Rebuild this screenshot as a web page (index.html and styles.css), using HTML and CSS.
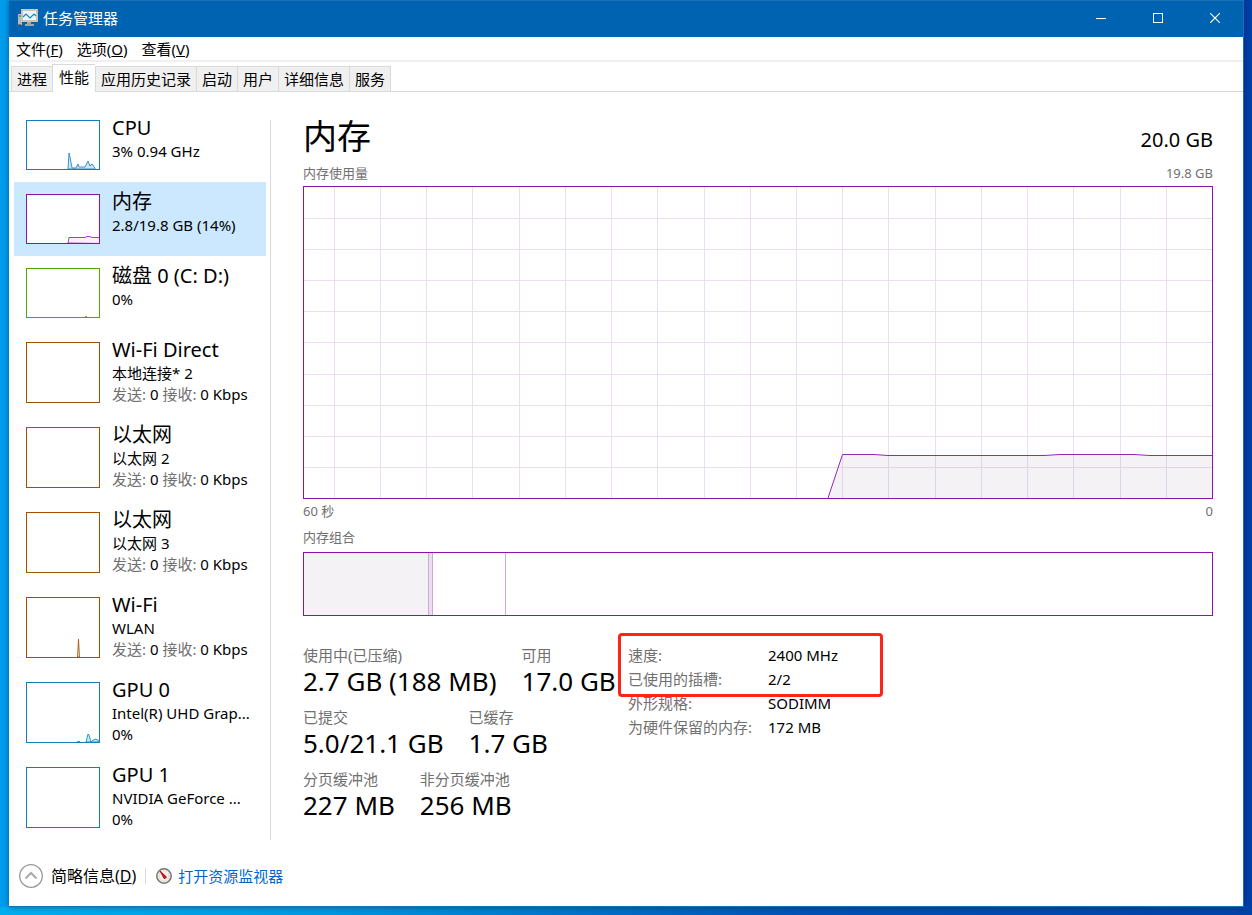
FILE: index.html
```html
<!DOCTYPE html>
<html lang="zh-CN">
<head>
    <meta charset="UTF-8">
    <meta name="viewport" content="width=device-width, initial-scale=1.0">
    <title>任务管理器</title>
    <link rel="stylesheet" href="styles.css">
</head>
<body>
<div class="window">
    <header class="titlebar">
        <svg class="app-icon" width="20" height="18" viewBox="0 0 20 18">
            <rect x="0" y="5" width="4" height="11" fill="#b8b8b8"/>
            <rect x="1" y="6" width="2" height="2" fill="#45c23c"/>
            <path d="M0 15h3v1H0z" fill="#777"/>
            <rect x="3" y="0" width="17" height="13" fill="#c9c5bd"/>
            <rect x="5" y="2" width="13" height="9" fill="#e9f8ff"/>
            <path d="M5 8l3-3 4 4 4-4 2 2" fill="none" stroke="#1585b5" stroke-width="1.2"/>
            <path d="M9 13h4v2h3v2H7v-2h2z" fill="#a9a59c"/>
        </svg>
        <h1>任务管理器</h1>
        <div class="controls">
            <button aria-label="最小化"><svg width="10" height="10"><path d="M0 5.5h10" stroke="#fff"/></svg></button>
            <button aria-label="最大化"><svg width="10" height="10"><rect x=".5" y=".5" width="9" height="9" fill="none" stroke="#fff"/></svg></button>
            <button aria-label="关闭"><svg width="10" height="10"><path d="M0 0l10 10M10 0L0 10" stroke="#fff" stroke-width="1.2"/></svg></button>
        </div>
    </header>
    <nav class="menu">
        <button>文件(<u>F</u>)</button>
        <button>选项(<u>O</u>)</button>
        <button>查看(<u>V</u>)</button>
    </nav>
    <div class="tabs">
        <button>进程</button>
        <button class="active">性能</button>
        <button>应用历史记录</button>
        <button>启动</button>
        <button>用户</button>
        <button>详细信息</button>
        <button>服务</button>
    </div>
    <div class="content">
        <aside class="sidebar">
            <button class="item">
                <svg class="thumb blue" viewBox="0 0 72 48"><path d="M41 48l1-16 1 4 2 11h4l2-4 1 3h6l3-6 2 5 2-2 3 4v1z"/></svg>
                <span class="info"><span class="name">CPU</span><span class="text">3% 0.94 GHz</span></span>
            </button>
            <button class="item selected">
                <svg class="thumb purple" viewBox="0 0 72 48"><path d="M41 48l1-5.500h16l2-1h3l2 1h8v6z"/></svg>
                <span class="info"><span class="name">内存</span><span class="text">2.8/19.8 GB (14%)</span></span>
            </button>
            <button class="item">
                <svg class="thumb green" viewBox="0 0 72 48"><path d="M58 47.500h2"/></svg>
                <span class="info"><span class="name">磁盘 0 (C: D:)</span><span class="text">0%</span></span>
            </button>
            <button class="item">
                <svg class="thumb tall brown" viewBox="0 0 72 59"></svg>
                <span class="info"><span class="name">Wi-Fi Direct</span><span class="text">本地连接* 2</span><span class="text"><i>发送:</i> 0 <i>接收:</i> 0 Kbps</span></span>
            </button>
            <button class="item">
                <svg class="thumb tall brown" viewBox="0 0 72 59"></svg>
                <span class="info"><span class="name">以太网</span><span class="text">以太网 2</span><span class="text"><i>发送:</i> 0 <i>接收:</i> 0 Kbps</span></span>
            </button>
            <button class="item">
                <svg class="thumb tall brown" viewBox="0 0 72 59"></svg>
                <span class="info"><span class="name">以太网</span><span class="text">以太网 3</span><span class="text"><i>发送:</i> 0 <i>接收:</i> 0 Kbps</span></span>
            </button>
            <button class="item">
                <svg class="thumb tall brown" viewBox="0 0 72 59"><path d="M50.500 59l1-18 1 18z"/></svg>
                <span class="info"><span class="name">Wi-Fi</span><span class="text">WLAN</span><span class="text"><i>发送:</i> 0 <i>接收:</i> 0 Kbps</span></span>
            </button>
            <button class="item">
                <svg class="thumb tall blue" viewBox="0 0 72 59"><path d="M50 58.500h3M59 59l2-8 1 1 2 7 2-2h1l1-1 3 1 1 2z"/></svg>
                <span class="info"><span class="name">GPU 0</span><span class="text">Intel(R) UHD Grap...</span><span class="text">0%</span></span>
            </button>
            <button class="item">
                <svg class="thumb tall blue" viewBox="0 0 72 59"></svg>
                <span class="info"><span class="name">GPU 1</span><span class="text">NVIDIA GeForce ...</span><span class="text">0%</span></span>
            </button>
        </aside>
        <main>
            <div class="heading">
                <h2>内存</h2>
                <span class="total">20.0 GB</span>
            </div>
            <div class="caption"><span>内存使用量</span><span>19.8 GB</span></div>
            <svg class="chart" viewBox="0 0 908 311" preserveAspectRatio="none">
                <path class="area" d="M524 311L538.500 267.500H570L584 268.500H740L756 267.500H830L846 268.500H908V311z"/>
                <path class="grid" d="M30.500 0v311M76.500 0v311M122.500 0v311M168.500 0v311M215.500 0v311M261.500 0v311M307.500 0v311M353.500 0v311M400.500 0v311M446.500 0v311M492.500 0v311M538.500 0v311M584.500 0v311M631.500 0v311M677.500 0v311M723.500 0v311M769.500 0v311M816.500 0v311M862.500 0v311M0 31.500h908M0 62.500h908M0 93.500h908M0 124.500h908M0 155.500h908M0 187.500h908M0 218.500h908M0 249.500h908M0 280.500h908"/>
                <path class="line" d="M524 311L538.500 267.500H570L584 268.500H740L756 267.500H830L846 268.500H908"/>
            </svg>
            <div class="caption axis"><span>60 秒</span><span>0</span></div>
            <div class="caption"><span>内存组合</span></div>
            <div class="composition">
                <div class="used" style="width: 13.8%"></div>
                <div class="modified" style="width: 0.45%"></div>
                <div class="standby" style="width: 8%"></div>
            </div>
            <div class="summary">
                <div class="stats">
                    <dl>
                        <div><dt>使用中(已压缩)</dt><dd>2.7 GB (188 MB)</dd></div>
                        <div><dt>可用</dt><dd>17.0 GB</dd></div>
                    </dl>
                    <dl>
                        <div><dt>已提交</dt><dd>5.0/21.1 GB</dd></div>
                        <div><dt>已缓存</dt><dd>1.7 GB</dd></div>
                    </dl>
                    <dl>
                        <div><dt>分页缓冲池</dt><dd>227 MB</dd></div>
                        <div><dt>非分页缓冲池</dt><dd>256 MB</dd></div>
                    </dl>
                </div>
                <div class="hardware">
                    <table>
                        <tr><th>速度:</th><td>2400 MHz</td></tr>
                        <tr><th>已使用的插槽:</th><td>2/2</td></tr>
                        <tr><th>外形规格:</th><td>SODIMM</td></tr>
                        <tr><th>为硬件保留的内存:</th><td>172 MB</td></tr>
                    </table>
                    <div class="highlight"></div>
                </div>
            </div>
        </main>
    </div>
    <footer>
        <button class="fewer">
            <svg width="24" height="24" viewBox="0 0 24 24" fill="none"><circle cx="12" cy="12" r="11.300" stroke="#999" stroke-width="1.300"/><path d="M6.500 14.500L12 9l5.500 5.500" stroke="#aaa" stroke-width="2"/></svg>
            <span>简略信息(<u>D</u>)</span>
        </button>
        <a class="monitor" href="#">
            <svg width="16" height="16" viewBox="0 0 16 16"><circle cx="8" cy="8" r="7.200" fill="#f4f2ee" stroke="#77746f" stroke-width="1.500"/><circle cx="8" cy="8" r="5" fill="none" stroke="#bbb" stroke-dasharray="1 1.500"/><path d="M4 3l6.500 6-2 2z" fill="#d3141b" stroke="#b10d14"/></svg>
            <span>打开资源监视器</span>
        </a>
    </footer>
</div>
</body>
</html>
```
FILE: styles.css
```css
* {
    margin: 0;
    padding: 0;
    box-sizing: border-box;
}

body {
    display: flex;
    min-height: 100vh;
    padding: 0 8px 8px 9px;
    font: 15px/20px "Noto Sans", "Noto Sans CJK SC", sans-serif;
    color: #000;
    background:
        linear-gradient(90deg, #00aef0, #0098e0 25%, #0050b4 65%, #0042a8) bottom / 100% 8px no-repeat,
        linear-gradient(90deg, #009cec 50%, #003fa6 50%);
}

button {
    font: inherit;
    color: inherit;
    background: none;
    border: none;
    text-align: left;
}

.window {
    flex: 1;
    display: flex;
    flex-direction: column;
    min-width: 0;
    background: #fff;
    border-right: 1px solid #1173b8;
    border-bottom: 1px solid #1173b8;
    box-shadow: 0 0 6px rgba(0, 0, 60, 0.4);
}

.titlebar {
    display: flex;
    align-items: center;
    height: 37px;
    padding: 0 0 2px 9px;
    color: #fff;
    background: #0063b1;
    border-top: 1px solid #1a72b9;
}

.app-icon {
    margin-right: 5px;
}

.titlebar h1 {
    font-size: 15px;
    font-weight: normal;
}

.controls {
    display: flex;
    height: 100%;
    margin-left: auto;
}

.controls button {
    display: flex;
    align-items: center;
    justify-content: center;
    width: 57px;
}

.menu {
    display: flex;
    gap: 14px;
    height: 25px;
    padding: 0 7px;
    border-bottom: 2px solid #f0f0f0;
}

.tabs {
    display: flex;
    align-items: flex-end;
    height: 30px;
    padding-left: 2px;
    border-bottom: 1px solid #d9d9d9;
}

.tabs button {
    height: 25px;
    padding: 0 5px;
    background: #f0f0f0;
    border-top: 1px solid #d9d9d9;
    border-left: 1px solid #d9d9d9;
}

.tabs button:last-child {
    border-right: 1px solid #d9d9d9;
}

.tabs .active {
    height: 28px;
    margin-bottom: -1px;
    padding: 0 6px 4px;
    background: #fff;
}

.content {
    display: flex;
    padding: 16px 30px 0 5px;
}

.sidebar {
    position: relative;
    flex: none;
    width: 257px;
}

/* divider starts level with the first thumbnail */
.sidebar::after {
    content: "";
    position: absolute;
    top: 12px;
    right: 0;
    bottom: 0;
    border-right: 1px solid #d9d9d9;
}

.item {
    display: flex;
    align-items: flex-start;
    gap: 12px;
    width: 252px;
    height: 74px;
    padding: 8px 0 0 12px;
}

.item:has(.tall) {
    height: 85px;
}

.selected {
    background: #cce8ff;
}

.thumb {
    flex: none;
    width: 74px;
    height: 50px;
    margin-top: 4px;
    border: 1px solid currentColor;
    background: #fff;
    fill: currentColor;
    fill-opacity: 0.2;
    stroke: currentColor;
    stroke-opacity: 0.8;
}

.tall {
    height: 61px;
}

.blue {
    color: #117dbb;
}

.purple {
    color: #8b12ae;
    fill-opacity: 0.06;
}

.green {
    color: #4da60c;
}

.brown {
    color: #a74f01;
}

.info {
    display: flex;
    flex-direction: column;
    min-width: 0;
}

.name {
    font-size: 20px;
    line-height: 24px;
    white-space: nowrap;
}

.text {
    white-space: nowrap;
}

.name + .text {
    line-height: 22px;
}

.text i {
    font-style: normal;
    color: #707070;
}

main {
    flex: 1;
    min-width: 0;
    padding-left: 32px;
}

.heading {
    display: flex;
    justify-content: space-between;
    align-items: center;
    height: 56px;
}

.heading h2 {
    font-size: 34px;
    font-weight: normal;
    line-height: 56px;
}

.total {
    margin-top: 8px;
    font-size: 20px;
}

.caption {
    display: flex;
    justify-content: space-between;
    height: 22px;
    font-size: 13px;
    line-height: 18px;
    color: #707070;
}

.chart {
    display: block;
    width: 100%;
    height: 313px;
    border: 1px solid #8b12ae;
}

.chart path {
    fill: none;
    vector-effect: non-scaling-stroke;
}

.chart .area {
    fill: #f4f2f5;
}

.chart .grid {
    stroke: rgba(139, 18, 174, 0.15);
    shape-rendering: crispEdges;
}

.chart .line {
    stroke: #9528b4;
}

.axis {
    height: 29px;
    padding-top: 3px;
}

.composition {
    display: flex;
    height: 64px;
    margin-top: 2px;
    border: 1px solid #8b12ae;
}

.composition div {
    border-right: 1px solid #c9aed3;
}

.composition .used {
    background: #f4f2f5;
}

.composition .modified {
    background: #eadff0;
}

.summary {
    display: flex;
    margin-top: 29px;
}

.stats {
    flex: none;
    width: 325px;
}

.stats dl {
    display: flex;
    gap: 25px;
    height: 62px;
    white-space: nowrap;
}

.stats dt {
    color: #707070;
}

.stats dd {
    font-size: 26px;
    line-height: 32px;
}

.hardware {
    position: relative;
}

table {
    border-collapse: collapse;
    margin-top: -2px;
}

th {
    width: 140px;
    height: 24px;
    font-weight: normal;
    text-align: left;
    color: #707070;
}

.highlight {
    position: absolute;
    top: -12px;
    left: -10px;
    width: 265px;
    height: 64px;
    border: 3px solid #ff2216;
    border-radius: 4px;
}

footer {
    display: flex;
    align-items: center;
    margin-top: auto;
    padding: 0 10px 18px;
}

.fewer {
    display: flex;
    align-items: center;
    gap: 8px;
    padding-right: 9px;
    font-size: 16px;
}

.monitor {
    display: flex;
    align-items: center;
    gap: 6px;
    padding-left: 10px;
    color: #0066cc;
    text-decoration: none;
    border-left: 1px solid #d9d9d9;
    line-height: 16px;
}
```
